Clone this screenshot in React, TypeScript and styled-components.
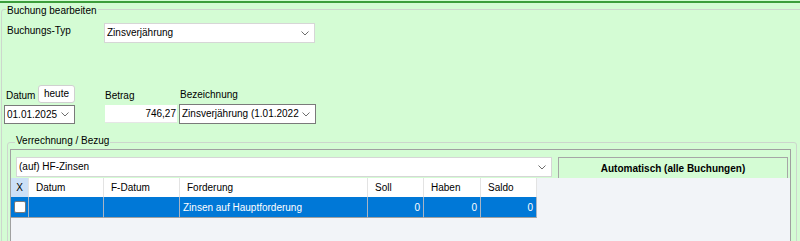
import React from 'react';
import styled, { createGlobalStyle } from 'styled-components';

const GlobalStyle = createGlobalStyle`
    html, body {
        margin: 0;
        padding: 0;
    }
    body {
        background: #d4fcd4;
        font-family: "Liberation Sans", Arial, sans-serif;
        font-size: 10px;
        color: #000;
        overflow: hidden;
    }
`;

const Page = styled.div`
    width: 800px;
    height: 241px;
    overflow: hidden;
    background: #d4fcd4;
    padding-top: 1px;
    box-sizing: border-box;
`;

const TopRule = styled.div`
    height: 2px;
    background: #3c9e3c;
`;

const GroupBox = styled.fieldset<{ $width?: number; $left: number; $top?: number }>`
    margin: ${p => p.$top ?? 0}px 0 0 ${p => p.$left}px;
    padding: 0 0 0 2px;
    width: ${p => (p.$width ? `${p.$width}px` : 'calc(100% + 40px)')};
    box-sizing: border-box;
    border: 1px solid #cdd6cd;
    border-radius: 3px;
    min-width: 0;
`;

const Legend = styled.legend<{ $offset: number; $shift: number }>`
    margin-left: ${p => p.$offset}px;
    padding: ${p => (p.$shift > 0 ? `${p.$shift}px 1px 0` : `0 1px ${-p.$shift}px`)};
    line-height: 12px;
    font-size: 10px;
`;

const TypeRow = styled.div`
    display: flex;
    align-items: flex-start;
    margin-top: 6px;
`;

const Label = styled.div<{ $width?: number }>`
    width: ${p => (p.$width ? `${p.$width}px` : 'auto')};
    margin-left: 3px;
    margin-top: 2px;
    line-height: 12px;
    white-space: nowrap;
`;

const ComboBox = styled.div<{ $width: number; $height?: number; $dark?: boolean }>`
    display: flex;
    align-items: center;
    justify-content: space-between;
    width: ${p => p.$width}px;
    height: ${p => p.$height ?? 20}px;
    box-sizing: border-box;
    padding: 0 5px 0 2px;
    background: #fff;
    border: 1px solid ${p => (p.$dark ? '#7a7a7a' : '#d6d6d6')};
    line-height: 16px;
    white-space: nowrap;
    overflow: hidden;
`;

const ComboText = styled.span`
    overflow: hidden;
    flex: 1;
`;

const Chevron = () => (
    <svg width="8" height="5" viewBox="0 0 8 5" style={{ flexShrink: 0 }}>
        <polyline points="0.5,0.5 4,4 7.5,0.5" fill="none" stroke="#6d6d6d" strokeWidth="1" />
    </svg>
);

const FieldRow = styled.div`
    display: flex;
    align-items: flex-end;
    margin-top: 41px;
`;

const Field = styled.div<{ $gap?: number }>`
    display: flex;
    flex-direction: column;
    margin-left: ${p => p.$gap ?? 0}px;
`;

const FieldHead = styled.div`
    display: flex;
    align-items: center;
    height: 18px;
    margin-bottom: 2px;
`;

const FieldLabel = styled.span<{ $indent?: number }>`
    margin-left: ${p => p.$indent ?? 0}px;
    line-height: 12px;
    margin-top: 3px;
`;

const SmallButton = styled.div`
    margin-left: auto;
    width: 37px;
    height: 18px;
    box-sizing: border-box;
    border: 1px solid #d0d0d0;
    border-radius: 3px;
    background: #fff;
    display: flex;
    align-items: center;
    justify-content: center;
    line-height: 16px;
`;

const TextBox = styled.div<{ $width: number }>`
    width: ${p => p.$width}px;
    height: 18px;
    box-sizing: border-box;
    background: #fff;
    border-bottom: 1px solid #e6e6e6;
    text-align: right;
    padding-right: 1px;
    line-height: 18px;
    margin-bottom: 1px;
`;

const Panel = styled.div`
    width: 781px;
    height: 100px;
    margin-top: -1px;
    box-sizing: border-box;
    border: 1px solid #a0a0a0;
    border-bottom: none;
    display: flex;
    flex-direction: column;
`;

const PanelTop = styled.div`
    display: flex;
    align-items: flex-start;
    padding: 7px 0 0 5px;
    gap: 6px;
`;

const AutoButton = styled.div`
    width: 230px;
    height: 21px;
    box-sizing: border-box;
    border: 1px solid #a6a6a6;
    border-bottom: none;
    background: #d4fcd4;
    font-weight: bold;
    display: flex;
    align-items: center;
    justify-content: center;
`;

const GridArea = styled.div`
    flex: 1;
    background: #f2f4f8;
`;

const Grid = styled.div`
    display: grid;
    grid-template-columns: 18px 75px 76px 188px 56px 57px 56px;
    grid-template-rows: 19px 21px;
    width: 526px;
`;

const HeadCell = styled.div<{ $active?: boolean }>`
    background: ${p => (p.$active ? '#cce0f7' : '#fff')};
    border-right: 1px solid #e3e3e3;
    display: flex;
    align-items: center;
    justify-content: ${p => (p.$active ? 'center' : 'flex-start')};
    padding-left: ${p => (p.$active ? 0 : 7)}px;
    line-height: 19px;
    white-space: nowrap;
`;

const DataCell = styled.div<{ $right?: boolean }>`
    background: #0078d7;
    color: #fff;
    border-right: 1px solid #a8b4c4;
    border-bottom: 1px solid #a0a0a0;
    display: flex;
    align-items: center;
    justify-content: ${p => (p.$right ? 'flex-end' : 'flex-start')};
    padding: ${p => (p.$right ? '0 3px 0 0' : '0 0 0 3px')};
    white-space: nowrap;
`;

const CheckBox = styled.div`
    width: 12px;
    height: 12px;
    box-sizing: border-box;
    background: #fff;
    border: 1px solid #7a7a7a;
    border-radius: 2px;
`;

const columns = ['Datum', 'F-Datum', 'Forderung', 'Soll', 'Haben', 'Saldo'];

export default function App() {
    return (
        <Page>
            <GlobalStyle />
            <TopRule />
            <GroupBox $left={1} $top={-1}>
                <Legend $offset={2} $shift={3}>Buchung bearbeiten</Legend>
                <TypeRow>
                    <Label $width={97}>Buchungs-Typ</Label>
                    <ComboBox $width={211}>
                        <ComboText>Zinsverjährung</ComboText>
                        <Chevron />
                    </ComboBox>
                </TypeRow>

                <FieldRow>
                    <Field>
                        <FieldHead>
                            <FieldLabel $indent={2}>Datum</FieldLabel>
                            <SmallButton>heute</SmallButton>
                        </FieldHead>
                        <ComboBox $width={71} $height={19} $dark>
                            <ComboText>01.01.2025</ComboText>
                            <Chevron />
                        </ComboBox>
                    </Field>
                    <Field $gap={30}>
                        <FieldHead>
                            <FieldLabel>Betrag</FieldLabel>
                        </FieldHead>
                        <TextBox $width={72}>746,27</TextBox>
                    </Field>
                    <Field $gap={2}>
                        <FieldHead>
                            <FieldLabel $indent={1}>Bezeichnung</FieldLabel>
                        </FieldHead>
                        <ComboBox $width={137} $dark>
                            <ComboText>Zinsverjährung (1.01.2022</ComboText>
                            <Chevron />
                        </ComboBox>
                    </Field>
                </FieldRow>

                <GroupBox $left={3} $width={790} $top={11}>
                    <Legend $offset={5} $shift={-3}>Verrechnung / Bezug</Legend>
                    <Panel>
                        <PanelTop>
                            <ComboBox $width={536}>
                                <ComboText>(auf) HF-Zinsen</ComboText>
                                <Chevron />
                            </ComboBox>
                            <AutoButton>Automatisch (alle Buchungen)</AutoButton>
                        </PanelTop>
                        <GridArea>
                            <Grid>
                                <HeadCell $active>X</HeadCell>
                                {columns.map(c => (
                                    <HeadCell key={c}>{c}</HeadCell>
                                ))}
                                <DataCell>
                                    <CheckBox />
                                </DataCell>
                                <DataCell />
                                <DataCell />
                                <DataCell>Zinsen auf Hauptforderung</DataCell>
                                <DataCell $right>0</DataCell>
                                <DataCell $right>0</DataCell>
                                <DataCell $right>0</DataCell>
                            </Grid>
                        </GridArea>
                    </Panel>
                </GroupBox>
            </GroupBox>
        </Page>
    );
}
